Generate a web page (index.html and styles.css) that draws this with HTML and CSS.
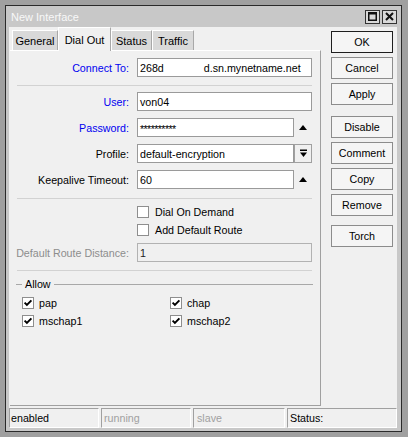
FILE: index.html
```html
<!DOCTYPE html>
<html>
<head>
<meta charset="utf-8">
<link rel="stylesheet" href="styles.css">
</head>
<body>
<div class="window">
  <div class="titlebar">
    <span class="title">New Interface</span>
    <div class="tbtns">
      <span class="tbtn"><svg width="9" height="9" viewBox="0 0 9 9"><rect x="0.75" y="0.75" width="7.5" height="7.5" fill="none" stroke="#111" stroke-width="1.5"/><rect x="0" y="0" width="9" height="2.5" fill="#111"/></svg></span>
      <span class="tbtn"><svg width="9" height="9" viewBox="0 0 9 9"><path d="M1 1 L8 8 M8 1 L1 8" stroke="#111" stroke-width="2" fill="none"/></svg></span>
    </div>
  </div>
  <div class="client">
    <div class="main">
      <div class="left">
        <div class="tabs">
          <div class="tab t-general">General</div>
          <div class="tab active t-dial">Dial Out</div>
          <div class="tab t-status">Status</div>
          <div class="tab t-traffic">Traffic</div>
        </div>
        <div class="panel">
          <div class="row">
            <span class="lbl req">Connect To:</span>
            <div class="input"><span>268d</span><span class="masked">d.sn.mynetname.net</span></div>
          </div>
          <div class="sep s1"></div>
          <div class="row">
            <span class="lbl req">User:</span>
            <div class="input">von04</div>
          </div>
          <div class="row">
            <span class="lbl req">Password:</span>
            <div class="field">
              <div class="input pw">**********</div>
              <span class="arrow"><svg width="8" height="5" viewBox="0 0 8 5"><polygon points="0,5 8,5 4,0" fill="#000"/></svg></span>
            </div>
          </div>
          <div class="row">
            <span class="lbl">Profile:</span>
            <div class="field">
              <div class="input">default-encryption</div>
              <span class="drop"><svg width="9" height="9" viewBox="0 0 9 9"><rect x="1" y="0.5" width="7" height="1.5" fill="#000"/><polygon points="1,3.5 8,3.5 4.5,8" fill="#000"/></svg></span>
            </div>
          </div>
          <div class="row">
            <span class="lbl">Keepalive Timeout:</span>
            <div class="field">
              <div class="input">60</div>
              <span class="arrow"><svg width="8" height="5" viewBox="0 0 8 5"><polygon points="0,5 8,5 4,0" fill="#000"/></svg></span>
            </div>
          </div>
          <div class="sep s2"></div>
          <div class="crow">
            <span></span>
            <div class="check"><span class="cb"></span><span>Dial On Demand</span></div>
          </div>
          <div class="crow">
            <span></span>
            <div class="check"><span class="cb"></span><span>Add Default Route</span></div>
          </div>
          <div class="row drd">
            <span class="lbl dis">Default Route Distance:</span>
            <div class="input dis">1</div>
          </div>
          <div class="sep s3"></div>
          <div class="group-head"><span class="gl gl-a"></span><span class="gt">Allow</span><span class="gl gl-b"></span></div>
          <div class="allow">
            <div class="check"><span class="cb"><svg width="10" height="10" viewBox="0 0 10 10"><polyline points="1.6,4.6 3.9,7 8.4,2.3" fill="none" stroke="#000" stroke-width="1.9"/></svg></span><span>pap</span></div>
            <div class="check"><span class="cb"><svg width="10" height="10" viewBox="0 0 10 10"><polyline points="1.6,4.6 3.9,7 8.4,2.3" fill="none" stroke="#000" stroke-width="1.9"/></svg></span><span>chap</span></div>
            <div class="check"><span class="cb"><svg width="10" height="10" viewBox="0 0 10 10"><polyline points="1.6,4.6 3.9,7 8.4,2.3" fill="none" stroke="#000" stroke-width="1.9"/></svg></span><span>mschap1</span></div>
            <div class="check"><span class="cb"><svg width="10" height="10" viewBox="0 0 10 10"><polyline points="1.6,4.6 3.9,7 8.4,2.3" fill="none" stroke="#000" stroke-width="1.9"/></svg></span><span>mschap2</span></div>
          </div>
        </div>
      </div>
      <div class="buttons">
        <div class="btn default">OK</div>
        <div class="btn">Cancel</div>
        <div class="btn">Apply</div>
        <div class="btn g">Disable</div>
        <div class="btn">Comment</div>
        <div class="btn">Copy</div>
        <div class="btn">Remove</div>
        <div class="btn g2">Torch</div>
      </div>
    </div>
    <div class="statusbar">
      <div class="sb sb1">enabled</div>
      <div class="sb sb2 off">running</div>
      <div class="sb sb3 off">slave</div>
      <div class="sb sb4">Status:</div>
    </div>
  </div>
</div>
</body>
</html>
```

FILE: styles.css
```css
* { box-sizing: border-box; }
html, body { margin: 0; padding: 0; }
body {
  background: #a0a0a0;
  font-family: "Liberation Sans", Arial, sans-serif;
  font-size: 10.7px;
  color: #000;
  width: 408px;
  height: 437px;
  overflow: hidden;
}
.window {
  margin: 5px 0 0 5px;
  width: 397px;
  height: 427px;
  border: 1px solid #2a2a2a;
  background: #c8c8c8;
  display: flex;
  flex-direction: column;
}
.titlebar {
  height: 21px;
  flex: none;
  display: flex;
  align-items: center;
  padding: 0 4px 0 5px;
}
.title { color: #f8f8f8; flex: 1; font-size: 11px; }
.tbtns { display: flex; gap: 2px; }
.tbtn {
  width: 15px;
  height: 14px;
  border: 1px solid #333;
  background: #d9d9d9;
  display: flex;
  align-items: center;
  justify-content: center;
}
.client {
  flex: 1;
  margin: 0 4px 3px 3px;
  background: #f0f0f0;
  display: flex;
  flex-direction: column;
}
.main { flex: 1; display: flex; }
.left {
  width: 311px;
  margin-left: 1px;
  display: flex;
  flex-direction: column;
}
.tabs {
  height: 23px;
  flex: none;
  display: flex;
  align-items: flex-end;
  padding-left: 2px;
}
.tab {
  height: 20px;
  background: #d9d9d9;
  border-top: 1px solid #fff;
  border-left: 1px solid #fff;
  border-right: 1px solid #a8a8a8;
  display: flex;
  align-items: center;
  justify-content: center;
  white-space: nowrap;
  font-size: 11px;
}
.tab.active {
  height: 24px;
  margin-bottom: -1px;
  background: #f0f0f0;
  position: relative;
  z-index: 1;
}
.t-general { width: 46px; }
.t-dial { width: 53px; }
.t-status { width: 41px; }
.t-traffic { width: 42px; }
.panel {
  flex: 1;
  border-top: 1px solid #fff;
  border-right: 1px solid #a0a0a0;
  border-bottom: 1px solid #a0a0a0;
  padding-top: 7px;
  display: flex;
  flex-direction: column;
}
.row, .crow {
  display: grid;
  grid-template-columns: 119px 175px;
  column-gap: 8px;
  align-items: center;
  flex: none;
}
.row { height: 19px; }
.crow { height: 18px; }
.row + .row { margin-top: 7px; }
.lbl { text-align: right; white-space: nowrap; }
.lbl.req { color: #0000f0; }
.lbl.dis { color: #8d8d8d; }
.input {
  height: 19px;
  border: 1px solid #9a9a9a;
  background: #fff;
  padding-left: 2px;
  display: flex;
  align-items: center;
  white-space: nowrap;
  overflow: hidden;
}
.input.dis { background: #f0f0f0; border-color: #b2b2b2; color: #222; }
.input.pw { letter-spacing: -0.6px; padding-top: 3px; }
.masked { margin-left: 40px; }
.field { display: flex; height: 19px; }
.field .input { flex: 1; }
.arrow {
  width: 18px;
  flex: none;
  display: flex;
  align-items: center;
  justify-content: center;
}
.drop {
  width: 18px;
  flex: none;
  border: 1px solid #a0a0a0;
  background: #f0f0f0;
  display: flex;
  align-items: center;
  justify-content: center;
}
.sep {
  height: 1px;
  width: 295px;
  background: #d2d2d2;
  margin-left: 7px;
  flex: none;
}
.s1 { margin-top: 8px; margin-bottom: 6px; }
.s2 { margin-top: 9px; margin-bottom: 4px; }
.s3 { margin-top: 8px; margin-bottom: 6px; }
.drd { margin-top: 4px; }
.check { display: flex; align-items: center; gap: 6px; white-space: nowrap; }
.cb {
  width: 12px;
  height: 12px;
  flex: none;
  border: 1px solid #8e8e8e;
  background: #fff;
  display: flex;
  align-items: center;
  justify-content: center;
}
.allow .check { gap: 5px; }
.group-head {
  height: 14px;
  flex: none;
  display: flex;
  align-items: center;
}
.gl { height: 1px; background: #a8a8a8; }
.gl-a { width: 6px; margin-left: 6px; }
.gl-b { flex: 1; margin-right: 7px; }
.gt { padding: 0 3px; }
.allow {
  margin-top: 3px;
  padding-left: 12px;
  display: grid;
  grid-template-columns: 148px 1fr;
  grid-auto-rows: 18px;
  align-items: center;
}
.buttons {
  width: 62px;
  margin-left: 10px;
  padding-top: 4px;
  display: flex;
  flex-direction: column;
  gap: 4px;
}
.btn {
  height: 22px;
  flex: none;
  border: 1px solid #8c8c8c;
  background: #f5f5f5;
  display: flex;
  align-items: center;
  justify-content: center;
}
.btn.default { border-color: #1e1e1e; }
.btn.g { margin-top: 7px; }
.btn.g2 { margin-top: 5px; }
.statusbar {
  height: 20px;
  margin-top: 2px;
  flex: none;
  display: flex;
  gap: 2px;
}
.sb {
  border-top: 1px solid #a0a0a0;
  border-left: 1px solid #a0a0a0;
  border-bottom: 1px solid #fff;
  border-right: 1px solid #fff;
  padding-left: 1px;
  display: flex;
  align-items: center;
  white-space: nowrap;
}
.sb.off { color: #a0a0a0; }
.sb1 { width: 90px; }
.sb2 { width: 90px; padding-left: 2px; }
.sb3 { width: 92px; padding-left: 3px; }
.sb4 { width: 110px; padding-left: 2px; }
```
